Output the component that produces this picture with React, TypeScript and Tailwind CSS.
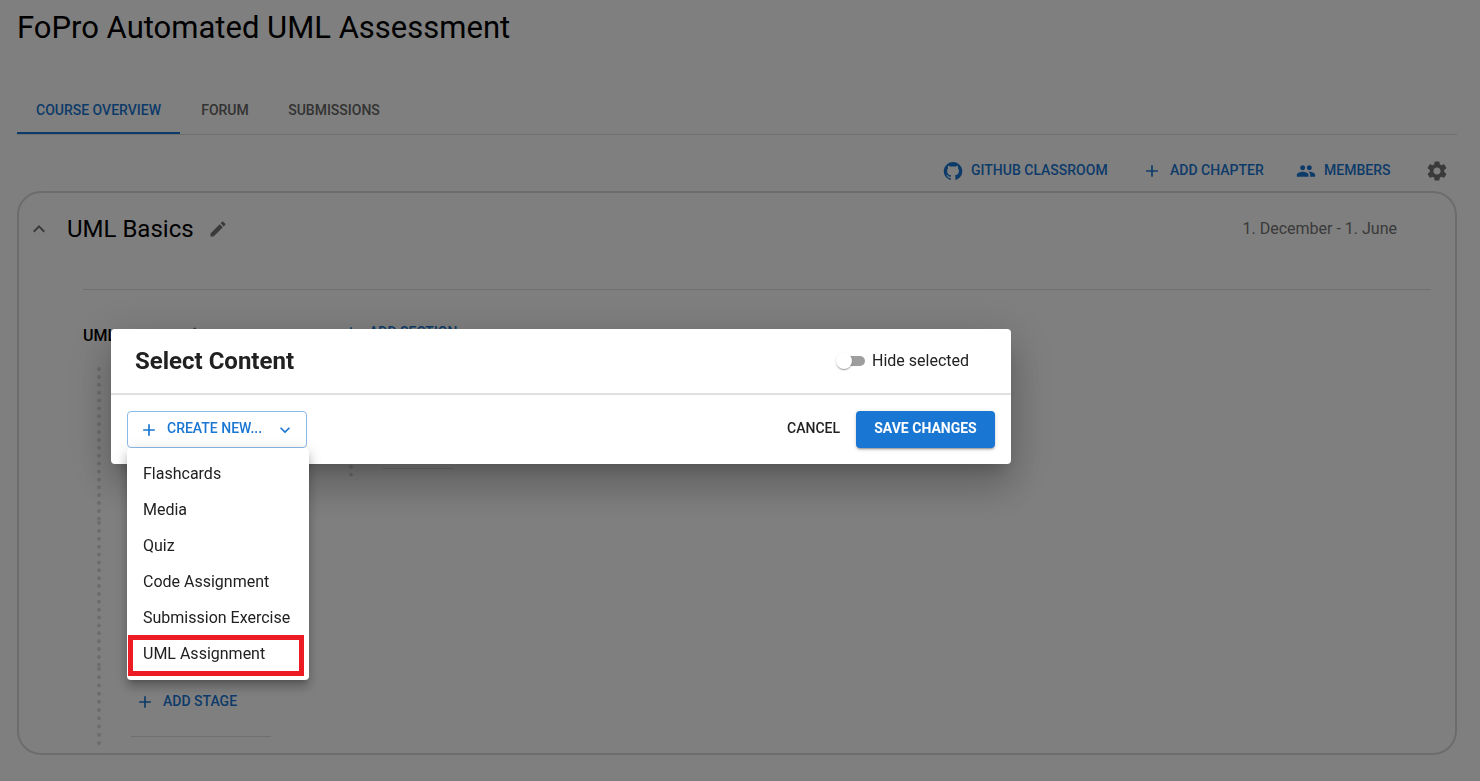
import { useState, type ReactNode } from "react";
import { MdAdd, MdEdit, MdKeyboardArrowDown, MdKeyboardArrowUp, MdPeople, MdSettings } from "react-icons/md";

const tabs = ["Course overview", "Forum", "Submissions"];

const contentTypes = ["Flashcards", "Media", "Quiz", "Code Assignment", "Submission Exercise", "UML Assignment"];

function GithubIcon() {
  return (
    <svg viewBox="0 0 24 24" className="h-5 w-5 shrink-0" fill="currentColor" aria-hidden="true">
      <path d="M12 1.27a11 11 0 00-3.48 21.46c.55.09.73-.28.73-.55v-1.84c-3.03.64-3.67-1.46-3.67-1.46-.55-1.29-1.28-1.65-1.28-1.65-.92-.65.1-.65.1-.65 1.1 0 1.73 1.1 1.73 1.1.92 1.65 2.57 1.2 3.21.92a2 2 0 01.64-1.47c-2.47-.27-5.04-1.19-5.04-5.5 0-1.1.46-2.1 1.2-2.84a3.76 3.76 0 010-2.93s.91-.28 3.11 1.1c1.8-.49 3.7-.49 5.5 0 2.1-1.38 3.02-1.1 3.02-1.1a3.76 3.76 0 01.1 2.93c.83.74 1.2 1.74 1.2 2.94 0 4.21-2.57 5.13-5.04 5.4.45.37.82.92.82 2.02v3.03c0 .27.1.64.73.55A11 11 0 0012 1.27" />
    </svg>
  );
}

function TextButton({ icon, children, className = "" }: { icon: ReactNode; children: ReactNode; className?: string }) {
  return (
    <button className={`flex items-center gap-2 text-sm font-medium uppercase text-[#1976d2] ${className}`}>
      {icon}
      <span className="pb-0.5">{children}</span>
    </button>
  );
}

function CoursePage() {
  return (
    <div className="flex min-h-screen flex-col bg-white pr-[23px] pb-[26px] pl-[17px] text-black">
      <h1 className="pt-[7px] text-[31px] leading-[42px]">FoPro Automated UML Assessment</h1>

      <nav className="mt-[37px] flex h-[49px] border-b border-[#dedede]">
        {tabs.map((t, i) => (
          <button
            key={t}
            className={`h-12 min-w-[90px] px-4 text-sm font-medium uppercase ${i === 0 ? "w-[163px] border-b-2 border-[#1976d2] pt-0.5 text-[#1976d2]" : "text-[#666666]"} ${i === 2 ? "w-32" : ""}`}
          >
            {t}
          </button>
        ))}
      </nav>

      <div className="mt-[17px] flex h-[39px] items-center justify-end pr-2 pb-0.5">
        <TextButton icon={<GithubIcon />} className="w-[171px]">GitHub Classroom</TextButton>
        <TextButton icon={<MdAdd className="h-5 w-5" />} className="ml-7 w-[126px]">Add chapter</TextButton>
        <TextButton icon={<MdPeople className="h-5 w-5" />} className="ml-7 w-[98px]">Members</TextButton>
        <button aria-label="Settings" className="ml-[31px] text-[#757575]">
          <MdSettings className="h-6 w-6" />
        </button>
      </div>

      <section className="rounded-3xl border-2 border-[#d9d8df]">
        <div className="flex h-[72px] items-center pr-[58px] pl-2">
          <button aria-label="Collapse chapter" className="text-[#757575]">
            <MdKeyboardArrowUp className="h-6 w-6" />
          </button>
          <h2 className="ml-4 text-2xl">UML Basics</h2>
          <button aria-label="Edit chapter" className="ml-3.5 text-[#757575]">
            <MdEdit className="h-5 w-5" />
          </button>
          <span className="ml-auto text-base text-[#757575]">1. December - 1. June</span>
        </div>

        <div className="mt-6 mr-6 ml-16 flex border-t border-[#dedede] pt-7 pb-2">
          <div className="w-[252px]">
            <div className="flex h-9 items-center">
              <h3 className="text-base font-medium">UML Basics</h3>
              <button aria-label="Edit section" className="ml-3 pb-0.5 text-[#757575]">
                <MdEdit className="h-5 w-5" />
              </button>
            </div>
            <div className="mt-[13px] ml-[14px]">
              <div className="h-[154px] border-l-4 border-dotted border-[#d8dadc]" />
              <div className="h-[146px] border-l-4 border-dotted border-[#d8dadc]" />
              <div className="flex h-[78px] flex-col items-start justify-end border-l-4 border-dotted border-[#d8dadc] pb-2 pl-[30px]">
                <TextButton icon={<MdAdd className="h-5 w-5" />} className="mb-4 h-9 pl-1">Add stage</TextButton>
                <div className="w-[140px] border-b border-[#dedede]" />
              </div>
            </div>
          </div>

          <div>
            <TextButton icon={<MdAdd className="h-5 w-5" />} className="h-[30px] pl-1.5">Add section</TextButton>
            <div className="mt-[19px] ml-[14px] flex h-[110px] flex-col items-start justify-end border-l-4 border-dotted border-[#d8dadc] pb-2 pl-[30px]">
              <div className="w-[70px] border-b border-[#dedede]" />
            </div>
          </div>
        </div>
      </section>
    </div>
  );
}

function CreateMenu() {
  const [open, setOpen] = useState(true);

  return (
    <div className="relative">
      <button
        aria-haspopup="menu"
        aria-expanded={open}
        onClick={() => setOpen(!open)}
        className="flex h-[37px] w-[180px] items-center rounded border border-[#8cbae8] px-[11px] text-sm font-medium uppercase text-[#1976d2]"
      >
        <MdAdd className="h-5 w-5" />
        <span className="ml-2 pb-1">Create new...</span>
        <MdKeyboardArrowDown className="ml-auto h-5 w-5" />
      </button>
      {open ? (
        <ul
          role="menu"
          className="absolute top-full left-0 w-[182px] rounded bg-white py-2 shadow-[0_5px_5px_-3px_rgba(0,0,0,0.2),0_8px_10px_1px_rgba(0,0,0,0.14),0_3px_14px_2px_rgba(0,0,0,0.12)]"
        >
          {contentTypes.map((c) => (
            <li key={c} role="none">
              <button role="menuitem" className="h-9 w-full px-4 text-left text-base whitespace-nowrap">{c}</button>
            </li>
          ))}
          <li role="none" className="pointer-events-none absolute bottom-1 left-px h-[41px] w-44 border-5 border-[#ed1c24]" />
        </ul>
      ) : null}
    </div>
  );
}

function SelectContentDialog() {
  const [hide, setHide] = useState(false);

  return (
    <div className="fixed inset-0 flex items-start bg-black/50 pt-[329px] pl-[111px]">
      <div
        role="dialog"
        aria-labelledby="dialog-title"
        className="w-[900px] rounded bg-white text-[#212121] shadow-[0_11px_15px_-7px_rgba(0,0,0,0.2),0_24px_38px_3px_rgba(0,0,0,0.14),0_9px_46px_8px_rgba(0,0,0,0.12)]"
      >
        <div className="flex h-[66px] items-center justify-between border-b-2 border-[#e0e0e0] px-6">
          <h2 id="dialog-title" className="text-2xl font-bold">Select Content</h2>
          <label className="mr-4 flex w-[132px] items-center gap-[7px] text-base">
            <input
              type="checkbox"
              checked={hide}
              onChange={(e) => setHide(e.target.checked)}
              className="relative h-2.5 w-[26px] shrink-0 appearance-none rounded-full bg-[#9e9e9e] before:absolute before:-top-[3px] before:-left-[3px] before:h-4 before:w-4 before:rounded-full before:bg-white before:shadow-[0_2px_1px_-1px_rgba(0,0,0,0.2),0_1px_1px_0_rgba(0,0,0,0.14),0_1px_3px_0_rgba(0,0,0,0.12)] checked:bg-[#8cbae8] checked:before:left-[13px] checked:before:bg-[#1976d2]"
            />
            Hide selected
          </label>
        </div>
        <div className="flex items-center p-4">
          <CreateMenu />
          <button className="ml-auto px-4 pb-1 text-sm font-medium uppercase">Cancel</button>
          <button className="h-[37px] w-[139px] rounded bg-[#1976d2] pb-1 text-sm font-bold uppercase text-white shadow-[0_3px_1px_-2px_rgba(0,0,0,0.2),0_2px_2px_0_rgba(0,0,0,0.14),0_1px_5px_0_rgba(0,0,0,0.12)]">
            Save changes
          </button>
        </div>
      </div>
    </div>
  );
}

export default function App() {
  return (
    <div className="font-[Roboto,sans-serif]">
      <CoursePage />
      <SelectContentDialog />
    </div>
  );
}
